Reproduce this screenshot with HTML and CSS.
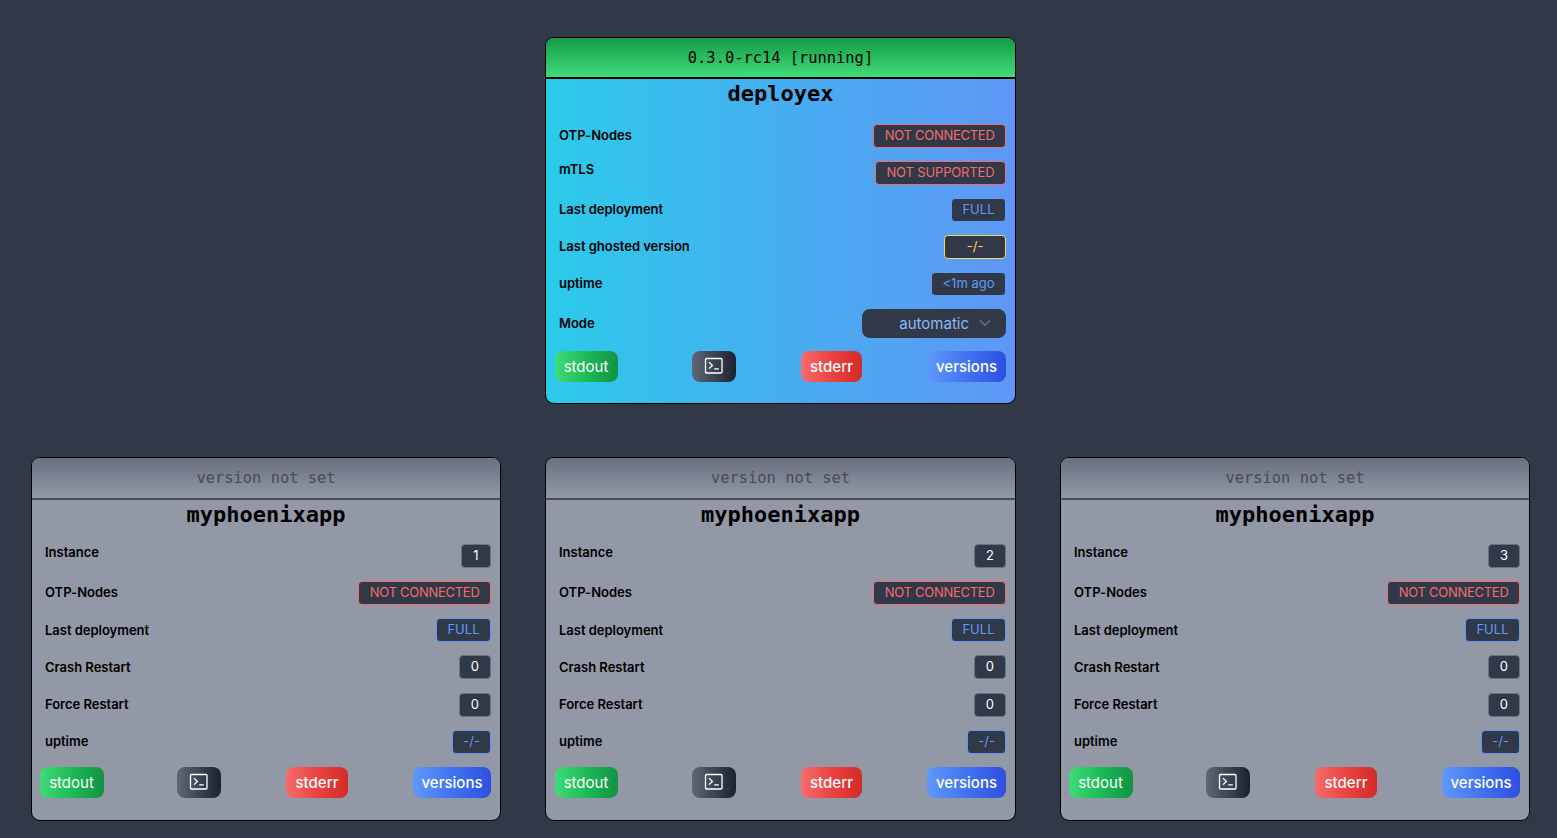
FILE: index.html
```
<!DOCTYPE html>
<html lang="en">
<head>
<meta charset="utf-8">
<title>deployex</title>
<link rel="stylesheet" href="styles.css">
</head>
<body>
<svg class="defs" aria-hidden="true">
  <symbol id="terminal" viewBox="0 0 20 18">
    <rect x="1.5" y="1.5" width="16.5" height="14.5" rx="1" fill="none" stroke="currentColor" stroke-width="1.3"/>
    <path d="M5 5.2 8.4 8.4 5 11.6M10.2 11.8h4.6" fill="none" stroke="currentColor" stroke-width="1.3"/>
  </symbol>
</svg>
<main class="board">
  <section class="card main">
    <header class="status">0.3.0-rc14 [running]</header>
    <h2 class="name">deployex</h2>
    <div class="rows">
      <div class="row"><span class="label">OTP-Nodes</span><span class="badge red">NOT CONNECTED</span></div>
      <div class="row raised"><span class="label">mTLS</span><span class="badge red wide">NOT SUPPORTED</span></div>
      <div class="row"><span class="label">Last deployment</span><span class="badge blue">FULL</span></div>
      <div class="row"><span class="label">Last ghosted version</span><span class="badge yellow">-/-</span></div>
      <div class="row"><span class="label">uptime</span><span class="badge blue">&lt;1m ago</span></div>
      <div class="row mode"><span class="label">Mode</span><span class="select">automatic<svg class="chevron" viewBox="0 0 12 8"><path d="M1 1.2 6 6.2 11 1.2"/></svg></span></div>
    </div>
    <div class="actions"><span class="btn out">stdout</span><span class="btn term"><svg class="icon"><use href="#terminal"/></svg></span><span class="btn err">stderr</span><span class="btn ver">versions</span></div>
  </section>
  <section class="card app first">
    <header class="status">version not set</header>
    <h2 class="name">myphoenixapp</h2>
    <div class="rows">
      <div class="row raised"><span class="label">Instance</span><span class="badge gray">1</span></div>
      <div class="row"><span class="label">OTP-Nodes</span><span class="badge red">NOT CONNECTED</span></div>
      <div class="row"><span class="label">Last deployment</span><span class="badge blue">FULL</span></div>
      <div class="row"><span class="label">Crash Restart</span><span class="badge gray">0</span></div>
      <div class="row"><span class="label">Force Restart</span><span class="badge gray">0</span></div>
      <div class="row"><span class="label">uptime</span><span class="badge blue dash">-/-</span></div>
    </div>
    <div class="actions"><span class="btn out">stdout</span><span class="btn term"><svg class="icon"><use href="#terminal"/></svg></span><span class="btn err">stderr</span><span class="btn ver">versions</span></div>
  </section>
  <section class="card app">
    <header class="status">version not set</header>
    <h2 class="name">myphoenixapp</h2>
    <div class="rows">
      <div class="row raised"><span class="label">Instance</span><span class="badge gray">2</span></div>
      <div class="row"><span class="label">OTP-Nodes</span><span class="badge red">NOT CONNECTED</span></div>
      <div class="row"><span class="label">Last deployment</span><span class="badge blue">FULL</span></div>
      <div class="row"><span class="label">Crash Restart</span><span class="badge gray">0</span></div>
      <div class="row"><span class="label">Force Restart</span><span class="badge gray">0</span></div>
      <div class="row"><span class="label">uptime</span><span class="badge blue dash">-/-</span></div>
    </div>
    <div class="actions"><span class="btn out">stdout</span><span class="btn term"><svg class="icon"><use href="#terminal"/></svg></span><span class="btn err">stderr</span><span class="btn ver">versions</span></div>
  </section>
  <section class="card app last">
    <header class="status">version not set</header>
    <h2 class="name">myphoenixapp</h2>
    <div class="rows">
      <div class="row raised"><span class="label">Instance</span><span class="badge gray">3</span></div>
      <div class="row"><span class="label">OTP-Nodes</span><span class="badge red">NOT CONNECTED</span></div>
      <div class="row"><span class="label">Last deployment</span><span class="badge blue">FULL</span></div>
      <div class="row"><span class="label">Crash Restart</span><span class="badge gray">0</span></div>
      <div class="row"><span class="label">Force Restart</span><span class="badge gray">0</span></div>
      <div class="row"><span class="label">uptime</span><span class="badge blue dash">-/-</span></div>
    </div>
    <div class="actions"><span class="btn out">stdout</span><span class="btn term"><svg class="icon"><use href="#terminal"/></svg></span><span class="btn err">stderr</span><span class="btn ver">versions</span></div>
  </section>
</main>
</body>
</html>
```
FILE: styles.css
```
* { box-sizing: border-box; }
body {
  margin: 0;
  height: 838px;
  overflow: hidden;
  background: #313848;
  color: #000;
  font-family: Inter, "Liberation Sans", sans-serif;
}
.defs { display: none; }
.board {
  display: grid;
  grid-template-columns: 470px 471px 470px;
  grid-template-rows: 367px 364px;
  column-gap: 44px;
  row-gap: 53px;
  padding: 37px 0 0 31px;
}
.card {
  display: flex;
  flex-direction: column;
  border: 1px solid #000;
  border-radius: 9px;
  overflow: hidden;
}
.main {
  grid-column: 2;
  background: linear-gradient(to right, #2bcbea, #46aef0 50%, #5e97f6);
}
.first { grid-column: 1; }
.app { background: #9298a6; }
.status {
  height: 41px;
  flex: none;
  border-bottom: 2px solid #000;
  text-align: center;
  font: 15.4px/40px "DejaVu Sans Mono", monospace;
  background: linear-gradient(#149a46, #41dc7a);
}
.app .status {
  height: 42px;
  color: #494c53;
  border-color: #494c53;
  background: linear-gradient(#6a7080, #9298a6);
}
.name {
  margin: 0;
  flex: none;
  height: 38px;
  text-align: center;
  font: bold 22px/29px "DejaVu Sans Mono", monospace;
}
.app .name { height: 37px; }
.rows { padding: 0 9px 0 13px; }
.row {
  display: flex;
  align-items: center;
  justify-content: space-between;
  height: 37.1px;
}
.app .row { height: 37.24px; }
.mode { height: 42px; }
.label {
  font-size: 13px;
  font-weight: 600;
  line-height: 20px;
  letter-spacing: -0.02px;
  padding-bottom: 1px;
}
.raised .label { padding-bottom: 7px; }
.badge {
  height: 24px;
  border: 1px solid;
  border-radius: 4px;
  padding: 0 10.5px;
  background: #313848;
  font-size: 13px;
  line-height: 21px;
}
.red { color: #f46c6b; letter-spacing: -0.28px; }
.wide { letter-spacing: -0.14px; }
.blue { color: #609af8; }
.dash { padding: 0 10px; }
.yellow { color: #f7da4b; padding: 0 21.5px; }
.gray {
  min-width: 30px;
  padding: 0 11px;
  text-align: center;
  color: #fff;
  border-color: #6a7080;
}
.select {
  display: flex;
  align-items: center;
  justify-content: flex-end;
  gap: 10px;
  width: 144px;
  height: 29px;
  padding-right: 15px;
  border-radius: 8px;
  background: #313848;
  color: #8db9f8;
  font-size: 15px;
}
.chevron {
  width: 12px;
  height: 8px;
  fill: none;
  stroke: #6b7080;
  stroke-width: 1.5;
}
.actions {
  display: flex;
  padding: 6.5px 9px 0;
}
.btn {
  display: flex;
  align-items: center;
  justify-content: center;
  flex: none;
  height: 31px;
  border-radius: 8px;
  color: #fff;
  font-size: 15px;
  font-weight: 500;
}
.out {
  width: 63px;
  margin-right: 74px;
  padding-right: 1px;
  background: linear-gradient(to right, #40da79, #1cbb57, #139243);
  font-weight: 400;
}
.term {
  width: 44px;
  margin-right: 65px;
  padding-bottom: 1px;
  background: linear-gradient(to right, #606675, #3d4453, #1c212e);
}
.err {
  width: 61px;
  margin-right: 65px;
  background: linear-gradient(to right, #f76c6b, #ea4341, #d32b26);
}
.ver {
  width: 79px;
  background: linear-gradient(to right, #5f99f7, #4173f1, #2e4fe0);
}
.app .actions { padding-top: 7px; }
.first .actions,
.last .actions { padding-left: 8px; }
.first .out,
.last .out { width: 64px; margin-right: 73px; }
.first .err,
.last .err { width: 62px; }
.first .ver,
.last .ver { width: 78px; }
.icon { width: 20px; height: 18px; }
```
